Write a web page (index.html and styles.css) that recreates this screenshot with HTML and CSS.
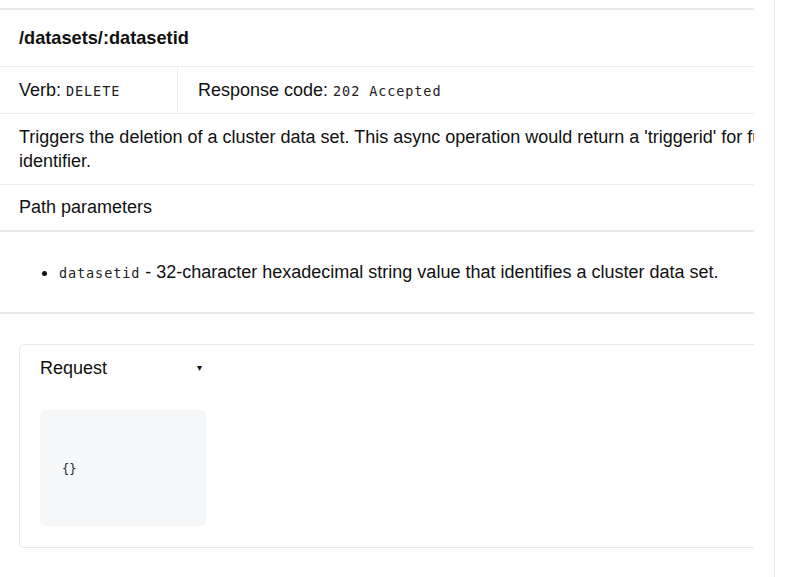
FILE: index.html
```html
<!DOCTYPE html>
<html>
<head>
<meta charset="utf-8">
<link rel="stylesheet" href="styles.css">
</head>
<body>
<div class="page">
  <div class="viewport">
    <div class="doc">
      <div class="table">
        <div class="row head">/datasets/:datasetid</div>
        <div class="row split">
          <div class="cell verb">Verb: <code>DELETE</code></div>
          <div class="cell resp">Response code: <code>202 Accepted</code></div>
        </div>
        <div class="row desc">Triggers the deletion of a cluster data set. This async operation would return a 'triggerid' for further tracking, which is a unique<br>identifier.</div>
        <div class="row params-title">Path parameters</div>
        <div class="row params">
          <ul class="plist">
            <li><code>datasetid</code> - 32-character hexadecimal string value that identifies a cluster data set.</li>
          </ul>
        </div>
      </div>
      <div class="card">
        <div class="card-head">
          <span class="card-title">Request</span>
          <span class="caret">&#9662;</span>
        </div>
        <pre class="code">{}</pre>
      </div>
    </div>
  </div>
  <div class="rail"></div>
</div>
</body>
</html>
```
FILE: styles.css
```css
html, body {
  margin: 0;
  padding: 0;
  background: #ffffff;
}
body {
  font-family: "Liberation Sans", Arial, sans-serif;
  font-size: 18px;
  color: #111111;
}
.page {
  display: flex;
  height: 577px;
}
.viewport {
  width: 754px;
  flex: 0 0 754px;
  overflow: hidden;
  padding-top: 8px;
}
.doc {
  width: 1100px;
}
.table {
  border-top: 2px solid #e8e9eb;
}
.row {
  padding: 0 19px;
  line-height: 24px;
}
.head {
  font-weight: bold;
  font-size: 18.2px;
  padding-top: 16px;
  padding-bottom: 16px;
  border-bottom: 1px solid #eceded;
}
.split {
  display: flex;
  padding: 0;
  border-bottom: 1px solid #eceded;
}
.cell {
  padding: 11px 19px;
}
.verb {
  box-sizing: border-box;
  width: 178px;
  border-right: 1px solid #eceded;
}
.resp {
  padding-left: 20px;
}
code {
  font-family: "DejaVu Sans Mono", monospace;
  font-size: 13.5px;
  line-height: 16px;
  letter-spacing: 0.9px;
  color: #222;
}
.desc {
  padding-top: 11px;
  padding-bottom: 11px;
  border-bottom: 1px solid #eceded;
  white-space: nowrap;
}
.params-title {
  padding-top: 10px;
  padding-bottom: 11px;
  border-bottom: 2px solid #e8e9eb;
}
.params {
  padding-top: 12px;
  padding-bottom: 12px;
  border-bottom: 2px solid #e8e9eb;
}
.plist {
  margin: 16px 0;
  padding-left: 40px;
}
.card {
  margin: 30px 19px 0 19px;
  border: 1px solid #e8e9eb;
  border-radius: 5px;
  padding: 11px 20px 21px 20px;
}
.card-head {
  display: flex;
  align-items: center;
  width: 166px;
  justify-content: space-between;
  line-height: 24px;
  margin-bottom: 30px;
}
.caret {
  font-size: 10px;
  margin-right: 4px;
  color: #111;
}
.code {
  margin: 0;
  height: 116px;
  width: 166px;
  box-sizing: border-box;
  padding: 51px 22px;
  background: #f6f7f9;
  border-radius: 5px;
  font-family: "DejaVu Sans Mono", monospace;
  font-size: 12px;
  line-height: 16px;
  color: #222;
}
.rail {
  margin-left: 20px;
  border-left: 1px solid #e6e7e8;
  height: 577px;
}
```
